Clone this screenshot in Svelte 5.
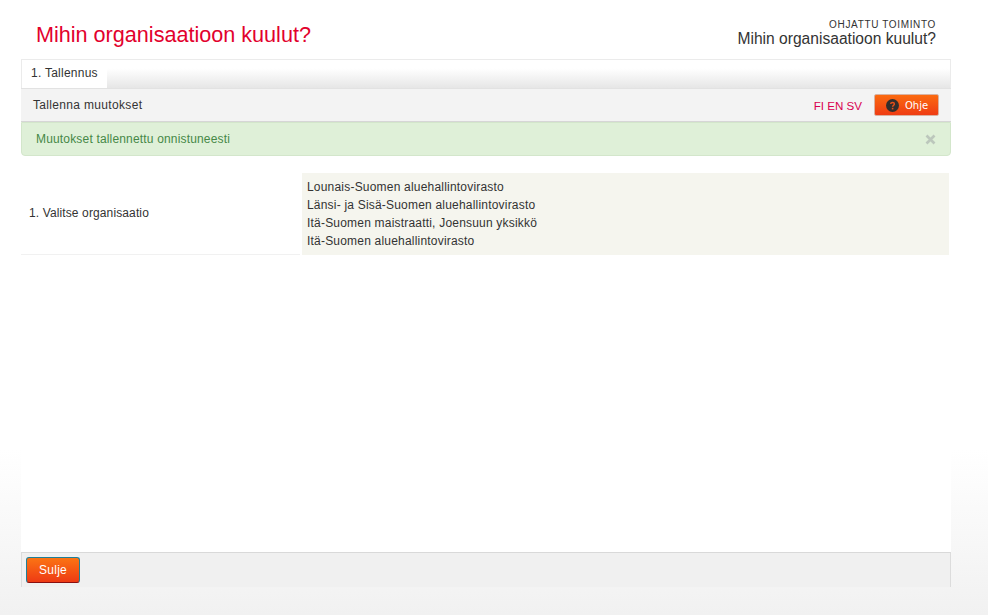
<script>
	const organisations = [
		'Lounais-Suomen aluehallintovirasto',
		'Länsi- ja Sisä-Suomen aluehallintovirasto',
		'Itä-Suomen maistraatti, Joensuun yksikkö',
		'Itä-Suomen aluehallintovirasto'
	];
</script>

<div class="page">
	<header class="top">
		<h1>Mihin organisaatioon kuulut?</h1>
		<div class="guide">
			<div class="guide-label">OHJATTU TOIMINTO</div>
			<div class="guide-name">Mihin organisaatioon kuulut?</div>
		</div>
	</header>

	<main class="panel">
		<nav class="tabs">
			<span class="tab">1. Tallennus</span>
		</nav>
		<div class="toolbar">
			<span class="save">Tallenna muutokset</span>
			<span class="langs">FI EN SV</span>
			<button class="help">
				<svg width="13" height="13" viewBox="0 0 13 13">
					<circle cx="6.5" cy="6.5" r="6.5" fill="#332e2c" />
					<path d="M4.7 5.1c0-2.2 3.7-2.2 3.7 0 0 1.3-1.8 1.3-1.8 2.6" fill="none" stroke="#e8501a" stroke-width="1.4" />
					<rect x="5.8" y="8.8" width="1.6" height="1.6" fill="#e8501a" />
				</svg>
				Ohje
			</button>
		</div>
		<div class="alert">
			<span>Muutokset tallennettu onnistuneesti</span>
			<svg class="close" width="11" height="11" viewBox="0 0 11 11">
				<path d="M1.5 1.5l8 8M9.5 1.5l-8 8" stroke="#bcc7bc" stroke-width="2.6" />
			</svg>
		</div>

		<div class="question">
			<div class="question-label">1. Valitse organisaatio</div>
			<ul class="answers">
				{#each organisations as organisation}
					<li>{organisation}</li>
				{/each}
			</ul>
		</div>

		<footer class="bottom">
			<button class="close-btn">Sulje</button>
		</footer>
	</main>
</div>

<style>
	:global(body) {
		margin: 0;
		background: #f1f1f1;
	}
	.page {
		box-sizing: border-box;
		height: 615px;
		padding: 0 37px 28px 21px;
		display: flex;
		flex-direction: column;
		font-family: 'Liberation Sans', Arial, sans-serif;
		font-size: 12px;
		letter-spacing: 0.25px;
		color: #333;
		background: linear-gradient(#fff 0, #fff 450px, #f1f1f1 100%);
	}
	.top {
		height: 59px;
		flex: none;
		display: flex;
		justify-content: space-between;
		padding: 0 15px;
	}
	h1 {
		margin: 21px 0 0;
		font-size: 21.6px;
		line-height: 27px;
		font-weight: 400;
		letter-spacing: 0;
		color: #e2012d;
	}
	.guide {
		padding-top: 19px;
		text-align: right;
	}
	.guide-label {
		font-size: 10px;
		line-height: 11px;
		letter-spacing: 0.65px;
		color: #333;
	}
	.guide-name {
		font-size: 15.6px;
		line-height: 17px;
		letter-spacing: 0;
		color: #333;
	}
	.panel {
		flex: 1;
		display: flex;
		flex-direction: column;
		background: #fff;
	}
	.tabs {
		box-sizing: border-box;
		height: 29px;
		flex: none;
		display: flex;
		border: 1px solid #ebebeb;
		border-bottom: 0;
		background: linear-gradient(#fff 30%, #e6e6e6 100%);
	}
	.tab {
		width: 85px;
		padding-left: 9px;
		box-sizing: border-box;
		background: #fff;
		line-height: 27px;
	}
	.toolbar {
		box-sizing: border-box;
		height: 34px;
		flex: none;
		display: flex;
		align-items: center;
		padding: 0 12px;
		background: #f3f3f3;
		border-top: 1px solid #e2e2e2;
		border-bottom: 1px solid #d6d6d6;
	}
	.save {
		flex: 1;
		letter-spacing: 0.33px;
	}
	.langs {
		color: #d9004f;
		margin-right: 12px;
		font-size: 11.6px;
		letter-spacing: 0;
	}
	.help {
		box-sizing: border-box;
		width: 65px;
		height: 22px;
		padding: 0 0 0 11px;
		display: flex;
		align-items: center;
		gap: 6px;
		border: 1px solid #d9b2a2;
		border-radius: 2px;
		background: linear-gradient(#fb6a10, #ef3c13);
		color: #fff;
		font: 10px 'DejaVu Sans', sans-serif;
		letter-spacing: 0;
	}
	.alert {
		box-sizing: border-box;
		height: 34px;
		flex: none;
		display: flex;
		align-items: center;
		justify-content: space-between;
		padding: 0 14px;
		background: #dff0d8;
		border: 1px solid #d3e6cb;
		border-radius: 0 0 4px 4px;
		color: #468847;
		letter-spacing: 0.17px;
	}
	.question {
		margin: 17px 2px 0 0;
		display: flex;
	}
	.question-label {
		width: 279px;
		margin-right: 2px;
		padding: 0 0 2px 8px;
		box-sizing: border-box;
		display: flex;
		align-items: center;
		border-bottom: 1px solid #f1f1f1;
		letter-spacing: 0.12px;
	}
	.answers {
		flex: 1;
		margin: 0;
		padding: 5px;
		list-style: none;
		line-height: 18px;
		letter-spacing: 0.2px;
		background: #f5f5ee;
		height: 82px;
		box-sizing: border-box;
	}
	.bottom {
		box-sizing: border-box;
		margin-top: auto;
		height: 35px;
		flex: none;
		padding: 4px;
		border-top: 1px solid #d9d9d9;
		border-left: 1px solid #dcdcdc;
		border-right: 1px solid #dcdcdc;
		background: #f0f0f0;
	}
	.close-btn {
		box-sizing: border-box;
		display: block;
		width: 54px;
		height: 26px;
		padding: 0;
		border: 1px solid #1f7f96;
		border-bottom-color: #8a0f0f;
		border-radius: 3px;
		background: linear-gradient(#fb7414, #ee3a14);
		color: #fff;
		font: 12px 'Liberation Sans', Arial, sans-serif;
		letter-spacing: 0.25px;
	}
</style>
